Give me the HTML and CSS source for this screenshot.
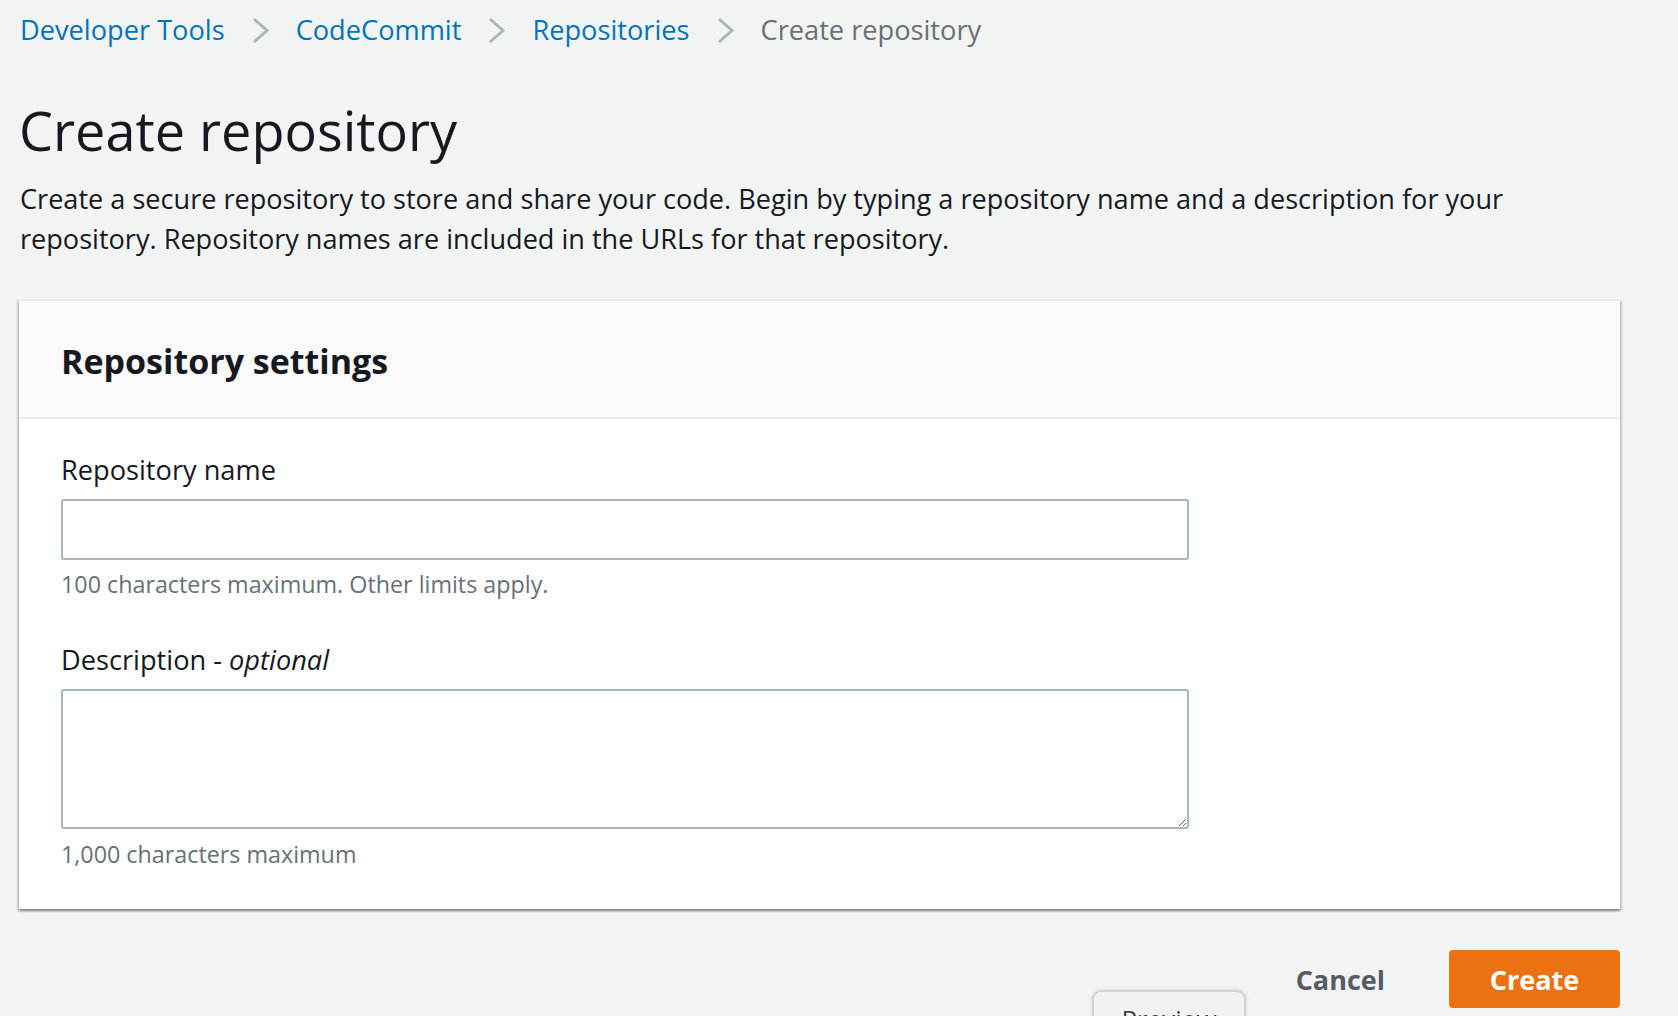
FILE: index.html
```html
<!DOCTYPE html>
<html lang="en">
<head>
<meta charset="utf-8">
<title>Create repository</title>
<link rel="stylesheet" href="styles.css">
</head>
<body>
<div class="page">
  <nav class="crumbs">
    <a class="crumb-link" href="#">Developer Tools</a>
    <svg class="chev" width="17" height="27" viewBox="0 0 17 27"><polyline points="2,2 15,13.5 2,25" fill="none" stroke="#aab7b8" stroke-width="3"/></svg>
    <a class="crumb-link" href="#">CodeCommit</a>
    <svg class="chev" width="17" height="27" viewBox="0 0 17 27"><polyline points="2,2 15,13.5 2,25" fill="none" stroke="#aab7b8" stroke-width="3"/></svg>
    <a class="crumb-link" href="#">Repositories</a>
    <svg class="chev" width="17" height="27" viewBox="0 0 17 27"><polyline points="2,2 15,13.5 2,25" fill="none" stroke="#aab7b8" stroke-width="3"/></svg>
    <span class="crumb-current">Create repository</span>
  </nav>

  <h1 class="title">Create repository</h1>
  <p class="intro">Create a secure repository to store and share your code. Begin by typing a repository name and a description for your repository. Repository names are included in the URLs for that repository.</p>

  <section class="card">
    <header class="card-header">
      <h2 class="card-title">Repository settings</h2>
    </header>
    <div class="card-body">
      <div class="field">
        <label class="field-label" for="repo-name">Repository name</label>
        <input class="text-input" id="repo-name" type="text">
        <div class="hint">100 characters maximum. Other limits apply.</div>
      </div>
      <div class="field field-second">
        <label class="field-label" for="repo-desc">Description - <i>optional</i></label>
        <textarea class="text-area" id="repo-desc"></textarea>
        <div class="hint hint-last">1,000 characters maximum</div>
      </div>
    </div>
  </section>

  <div class="actions">
    <button class="btn btn-cancel" type="button">Cancel</button>
    <button class="btn btn-create" type="button">Create</button>
  </div>
</div>

<div class="preview-tab">Preview</div>
</body>
</html>
```

FILE: styles.css
```css
* {
  box-sizing: border-box;
}

html, body {
  margin: 0;
  padding: 0;
  background: #f2f3f3;
}

body {
  font-family: "Open Sans", "Noto Sans", "Liberation Sans", sans-serif;
  color: #16191f;
  overflow: hidden;
  height: 1016px;
}

.page {
  width: 1601px;
  margin-left: 19px;
  padding-top: 10px;
}

.crumbs {
  display: flex;
  align-items: center;
  height: 40px;
  padding-left: 1px;
  font-size: 27.2px;
  line-height: 40px;
}

.crumb-link {
  color: #0073bb;
  text-decoration: none;
}

.crumb-current {
  color: #687078;
}

.chev {
  margin: 0 27px;
  display: block;
}

.title {
  margin: 50px 0 0 0;
  font-size: 54px;
  line-height: 60px;
  font-weight: 400;
}

.intro {
  margin: 19px 0 0 1px;
  font-size: 27.1px;
  line-height: 40px;
}

.card {
  margin-top: 40px;
  background: #ffffff;
  border-top: 2px solid #eaeded;
  box-shadow: 0 2px 2px 0 rgba(0, 28, 36, 0.3), 2px 2px 2px 0 rgba(0, 28, 36, 0.15), -2px 2px 2px 0 rgba(0, 28, 36, 0.15);
}

.card-header {
  background: #fafafa;
  border-bottom: 2px solid #eaeded;
  padding: 37px 40px 33px 42px;
}

.card-title {
  margin: 0;
  font-size: 34px;
  line-height: 46px;
  font-weight: 700;
}

.card-body {
  padding: 33px 40px 39px 42px;
}

.field {
  display: flex;
  flex-direction: column;
}

.field-second {
  margin-top: 42px;
}

.field-label {
  font-size: 27.2px;
  line-height: 36px;
  margin-bottom: 11px;
}

.text-input,
.text-area {
  width: 1128px;
  border: 2px solid #aab7b8;
  border-radius: 3px;
  background: #ffffff;
  font-family: inherit;
  font-size: 24px;
  margin: 0;
  padding: 8px 16px;
  outline: none;
}

.text-input {
  height: 61px;
}

.text-area {
  height: 140px;
  resize: vertical;
}

.hint {
  margin-top: 8px;
  font-size: 23.3px;
  line-height: 32px;
  color: #687078;
}

.hint-last {
  margin-top: 9px;
}

.actions {
  display: flex;
  justify-content: flex-end;
  gap: 21px;
  margin-top: 41px;
}

.btn {
  height: 58px;
  border: none;
  border-radius: 4px;
  font-family: inherit;
  font-size: 27px;
  font-weight: 700;
  padding: 0 43px;
  cursor: pointer;
}

.btn-cancel {
  background: transparent;
  color: #545b64;
}

.btn-create {
  width: 171px;
  padding: 0;
  background: #ec7211;
  color: #ffffff;
}

.preview-tab {
  position: fixed;
  left: 1092px;
  top: 990px;
  width: 154px;
  height: 60px;
  background: #f2f2f2;
  border: 2px solid #d0d2d3;
  border-radius: 9px 9px 0 0;
  box-shadow: 0 0 4px rgba(0, 0, 0, 0.12);
  font-size: 26px;
  line-height: 26px;
  padding-top: 14px;
  text-align: center;
  color: #3b3f44;
}
```
